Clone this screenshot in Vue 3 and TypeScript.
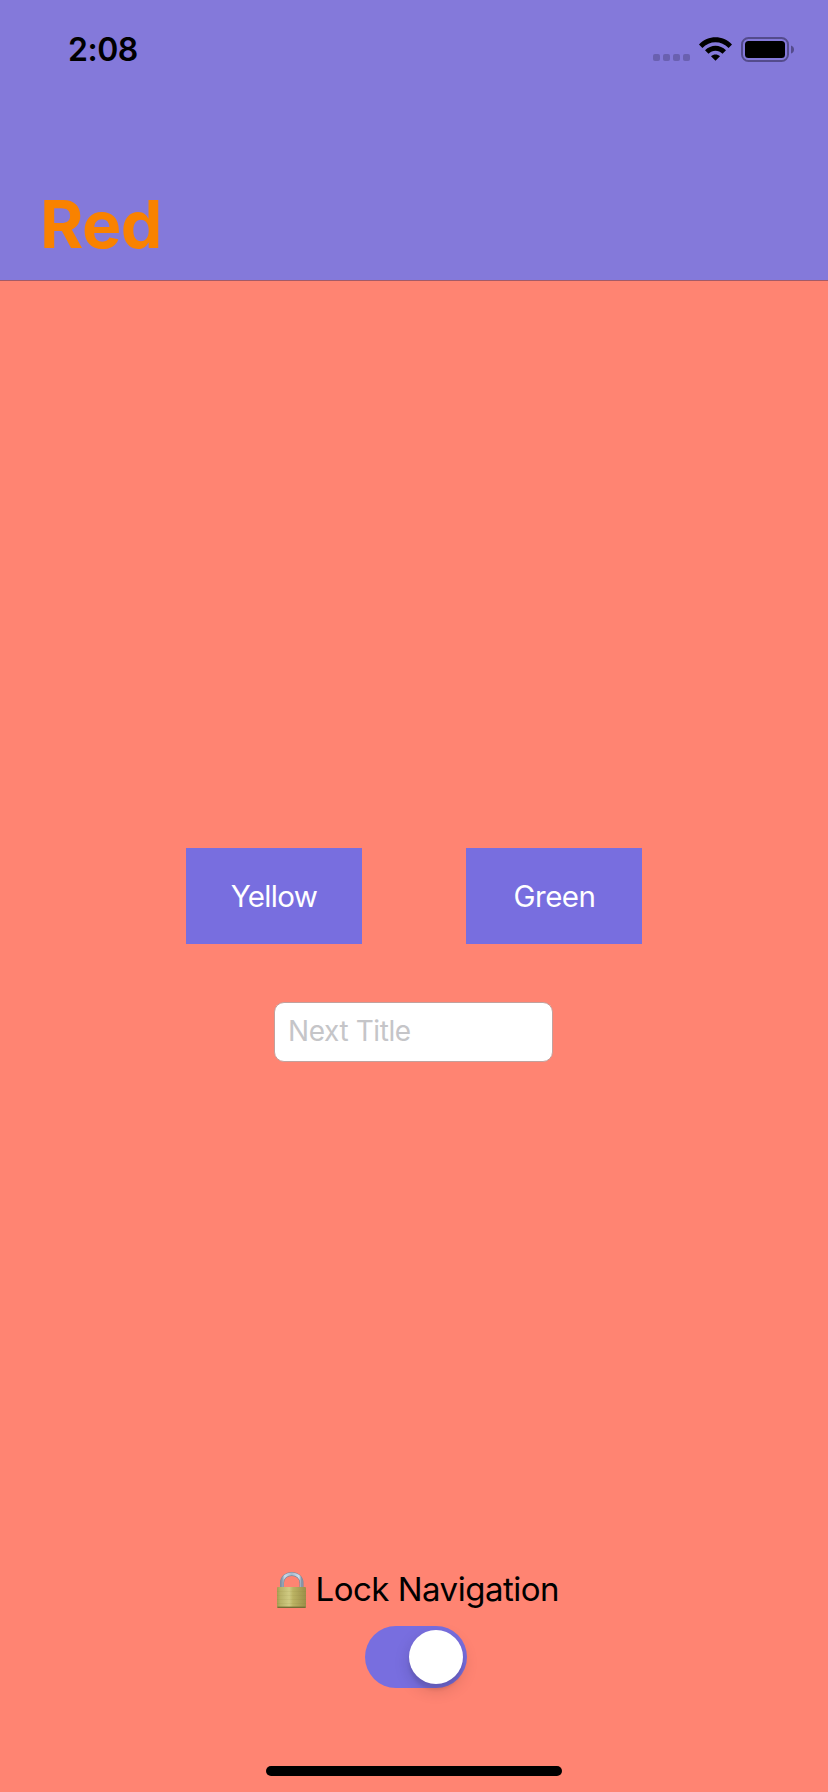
<script setup lang="ts">
import { ref } from 'vue'

const title = ref<string>('Red')
const nextTitle = ref<string>('')
const locked = ref<boolean>(true)
const dots: number[] = [0, 10, 20, 30]
</script>

<template>
  <main class="screen">
    <header class="header">
      <div class="status">
        <span class="time">2:08</span>
        <svg class="indicators" width="144" height="28" viewBox="0 0 144 28" aria-hidden="true">
          <rect v-for="x in dots" :key="x" :x="x + 1" y="19" width="7" height="7" rx="2" fill="#6a60b0" />
          <g fill="#000">
            <path d="M47 9.500 C56 -.2 71 -.2 80 9.500 L76.600 13 C69.500 5.300 57.500 5.300 50.400 13 Z" />
            <path d="M53 15.300 C59 9.300 68 9.300 74 15.300 L70.500 18.700 C66.600 14.800 60.400 14.800 56.500 18.700 Z" />
            <path d="M59 21.300 C61.500 19 65.500 19 68 21.300 L63.500 25.800 Z" />
          </g>
          <rect x="90" y="3" width="46" height="23" rx="6.500" fill="none" stroke="#544b8c" stroke-width="2" />
          <rect x="93" y="6" width="40" height="17" rx="3.500" fill="#000" />
          <path d="M139 10.500 Q142 11.500 142 14.500 Q142 17.500 139 18.500 Z" fill="#544b8c" />
        </svg>
      </div>
      <h1 class="title">{{ title }}</h1>
    </header>

    <div class="actions">
      <button class="action yellow" type="button"><span>Yellow</span></button>
      <button class="action green" type="button"><span>Green</span></button>
    </div>

    <input v-model="nextTitle" class="field" type="text" placeholder="Next Title" />

    <div class="lock-row">
      <svg class="lock" width="30" height="38" viewBox="0 0 30 38" aria-hidden="true">
        <defs>
          <linearGradient id="brass" x1="0" x2="1">
            <stop offset="0" stop-color="#a49c50" />
            <stop offset=".12" stop-color="#b9b267" />
            <stop offset=".42" stop-color="#d0cb83" />
            <stop offset=".55" stop-color="#bbb363" />
            <stop offset="1" stop-color="#9a8e48" />
          </linearGradient>
          <linearGradient id="steel" x1="0" x2="1">
            <stop offset="0" stop-color="#8796a8" />
            <stop offset=".15" stop-color="#cbdbea" />
            <stop offset=".5" stop-color="#a6b9cd" />
            <stop offset=".87" stop-color="#d1e0ed" />
            <stop offset="1" stop-color="#8796a8" />
          </linearGradient>
        </defs>
        <path d="M5 17 V12 C5 -.1 24.500 -.1 24.500 12 V17" fill="none" stroke="#78889a" stroke-width="4" />
        <path d="M5 17 V12 C5 -.1 24.500 -.1 24.500 12 V17" fill="none" stroke="url(#steel)" stroke-width="2.800" />
        <rect x="0" y="16" width="29" height="21" rx="1" fill="url(#brass)" />
        <path d="M0 20.500H29M0 24.500H29M0 28.500H29M0 32.500H29" stroke="#817830" stroke-opacity=".08" />
        <path d="M.5 36.300H28.500" stroke="#756c35" stroke-width="1.400" />
      </svg>
      <span class="lock-label">Lock Navigation</span>
    </div>

    <button
      class="switch"
      :class="{ on: locked }"
      type="button"
      role="switch"
      :aria-checked="locked"
      aria-label="Lock Navigation"
      @click="locked = !locked"
    >
      <span class="knob"></span>
    </button>

    <div class="home-bar"></div>
  </main>
</template>

<style>
body {
  margin: 0;
}
</style>

<style scoped>
* {
  box-sizing: border-box;
}
.screen {
  display: flex;
  flex-direction: column;
  width: 828px;
  height: 1792px;
  overflow: hidden;
  background: #ff8472;
  font-family: Inter, 'Liberation Sans', sans-serif;
}
.header {
  flex: none;
  height: 281px;
  background: #8479da;
  border-bottom: 1px solid #a55a66;
}
.status {
  display: flex;
  justify-content: space-between;
  height: 100px;
  padding: 30px 32px 0 68px;
}
.time {
  font-size: 32px;
  line-height: 39px;
  font-weight: 600;
  letter-spacing: -0.5px;
}
.indicators {
  margin-top: 5px;
}
.title {
  margin: 84px 0 0 40px;
  font-size: 66px;
  line-height: 80px;
  font-weight: 700;
  letter-spacing: -0.5px;
  color: #f98200;
}
.actions {
  display: flex;
  flex: none;
  gap: 104px;
  margin: 567px 0 0 186px;
}
.action {
  width: 176px;
  height: 96px;
  padding: 0;
  border: 0;
  background: #786edf;
  color: #fff;
  font-family: inherit;
  font-size: 29.5px;
  line-height: 36px;
  font-weight: 400;
  letter-spacing: -0.7px;
}
.green {
  padding-left: 1px;
  letter-spacing: -0.5px;
}
.field {
  flex: none;
  width: 279px;
  height: 60px;
  margin: 58px 0 0 274px;
  padding: 0 13px 3px;
  border: 1px solid #c2a19d;
  border-radius: 10px;
  outline: 0;
  background: #fff;
  font-family: inherit;
  font-size: 28px;
  letter-spacing: -0.4px;
}
.field::placeholder {
  color: #c5c5c8;
  opacity: 1;
}
.lock-row {
  display: flex;
  flex: none;
  height: 42px;
  margin: 509px 0 0 277px;
}
.lock-label {
  margin: -3px 0 0 8.5px;
  font-size: 33px;
  line-height: 42px;
  letter-spacing: -0.5px;
  white-space: nowrap;
}
.switch {
  display: flex;
  flex: none;
  width: 102px;
  height: 62px;
  margin: 13px 0 0 365px;
  padding: 4px;
  border: 0;
  border-radius: 31px;
  background: #786edf;
}
.switch.on {
  justify-content: flex-end;
}
.knob {
  width: 54px;
  height: 54px;
  border-radius: 50%;
  background: #fff;
  box-shadow: 0 6px 16px rgba(0, 0, 0, 0.15), 0 6px 3px rgba(0, 0, 0, 0.08);
}
.home-bar {
  flex: none;
  width: 296px;
  height: 10px;
  margin: 78px 0 0 266px;
  border-radius: 5px;
  background: #000;
}
</style>
